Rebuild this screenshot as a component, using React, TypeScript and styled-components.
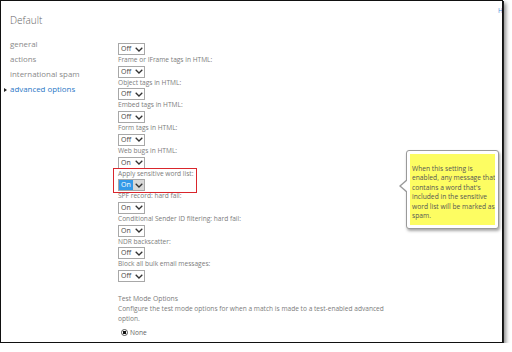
import React from "react";
import styled, { createGlobalStyle } from "styled-components";

const GlobalStyle = createGlobalStyle`
  html, body {
    margin: 0;
    padding: 0;
    background: #fff;
  }
  body {
    font-family: "Open Sans", "Noto Sans", sans-serif;
  }
`;

interface Option {
  label?: string;
  value: "On" | "Off";
  highlight?: boolean;
}

const options: Option[] = [
  { value: "Off" },
  { label: "Frame or IFrame tags in HTML:", value: "Off" },
  { label: "Object tags in HTML:", value: "Off" },
  { label: "Embed tags in HTML:", value: "Off" },
  { label: "Form tags in HTML:", value: "Off" },
  { label: "Web bugs in HTML:", value: "On" },
  { label: "Apply sensitive word list:", value: "On", highlight: true },
  { label: "SPF record: hard fail:", value: "On" },
  { label: "Conditional Sender ID filtering: hard fail:", value: "On" },
  { label: "NDR backscatter:", value: "Off" },
  { label: "Block all bulk email messages:", value: "Off" },
];

const navItems = ["general", "actions", "international spam", "advanced options"];

const tipLines = [
  "When this setting is",
  "enabled, any message that",
  "contains a word that's",
  "included in the sensitive",
  "word list will be marked as",
  "spam.",
];

function Chevron() {
  return (
    <svg width="8" height="5" viewBox="0 0 8 5">
      <path d="M0.7 0.7 L4 4 L7.3 0.7" fill="none" stroke="#333" strokeWidth="1.3" />
    </svg>
  );
}

function App() {
  return (
    <>
      <GlobalStyle />
      <Window>
        <Title>Default</Title>
        <HelpLink>Help</HelpLink>
        <Body>
          <Nav>
            {navItems.map((item, i) => (
              <NavItem key={item} $active={i === navItems.length - 1}>
                {item}
              </NavItem>
            ))}
          </Nav>
          <Main>
            {options.map((o, i) => (
              <Field key={i} $highlight={o.highlight}>
                {o.label && <Label>{o.label}</Label>}
                <SelectBox>
                  <SelectValue $selected={o.highlight}>{o.value}</SelectValue>
                  <SelectArrow $selected={o.highlight}>
                    <Chevron />
                  </SelectArrow>
                </SelectBox>
              </Field>
            ))}
            <Section>
              <SectionTitle>Test Mode Options</SectionTitle>
              <SectionText>
                Configure the test mode options for when a match is made to a test-enabled advanced
                option.
              </SectionText>
              <RadioRow>
                <Radio />
                None
              </RadioRow>
            </Section>
          </Main>
        </Body>
        <Tooltip>
          <TipInner>
            {tipLines.map((l) => (
              <div key={l}>{l}</div>
            ))}
          </TipInner>
        </Tooltip>
      </Window>
    </>
  );
}

export default App;

const Window = styled.div`
  position: relative;
  box-sizing: border-box;
  width: 503px;
  height: 343px;
  border: 1px solid #111;
  background: #fff;
  overflow: hidden;
  box-shadow: 1px 1px 0 #222, 3px 3px 4px rgba(0, 0, 0, 0.45);
`;

const Title = styled.div`
  padding: 12px 0 0 9px;
  height: 20px;
  font-size: 10px;
  line-height: 14px;
  font-weight: 300;
  color: #666;
`;

const HelpLink = styled.span`
  position: absolute;
  top: 5px;
  right: -10px;
  font-size: 6.5px;
  color: #4a8fd8;
`;

const Body = styled.div`
  display: grid;
  grid-template-columns: 117px 1fr;
  padding-top: 4px;
`;

const Nav = styled.ul`
  list-style: none;
  margin: 0;
  padding: 0 0 0 9px;
`;

const NavItem = styled.li<{ $active?: boolean }>`
  position: relative;
  font-size: 7.9px;
  line-height: 15px;
  color: ${({ $active }) => ($active ? "#2a78c6" : "#8a8a8a")};

  &::before {
    content: "";
    display: ${({ $active }) => ($active ? "block" : "none")};
    position: absolute;
    left: -6px;
    top: 5.5px;
    border-left: 3px solid #222;
    border-top: 2.5px solid transparent;
    border-bottom: 2.5px solid transparent;
  }
`;

const Main = styled.div`
  padding-top: 6px;
`;

const Field = styled.div<{ $highlight?: boolean }>`
  position: relative;

  &::after {
    content: "";
    display: ${({ $highlight }) => ($highlight ? "block" : "none")};
    position: absolute;
    left: -5px;
    top: -1px;
    width: 82px;
    bottom: -2px;
    border: 1px solid #d9262c;
  }
`;

const Label = styled.div`
  font-size: 6.6px;
  line-height: 10.7px;
  color: #7c7c7c;
  white-space: nowrap;
`;

const SelectBox = styled.div`
  display: flex;
  box-sizing: border-box;
  height: 12px;
  width: 27px;
  border: 1px solid #a8a8a8;
  background: #fff;
`;

const SelectValue = styled.span<{ $selected?: boolean }>`
  flex: 1;
  padding-left: 2px;
  font-size: 7px;
  line-height: 10px;
  color: ${({ $selected }) => ($selected ? "#fff" : "#444")};
  background: ${({ $selected }) => ($selected ? "#3399e8" : "transparent")};
`;

const SelectArrow = styled.span<{ $selected?: boolean }>`
  display: flex;
  align-items: center;
  justify-content: center;
  width: 11px;
  background: ${({ $selected }) => ($selected ? "#d8d8d8" : "transparent")};
`;

const Section = styled.div`
  margin-top: 11px;
  color: #7c7c7c;
`;

const SectionTitle = styled.div`
  font-size: 6.8px;
  line-height: 11px;
`;

const SectionText = styled.div`
  width: 272px;
  font-size: 6.6px;
  line-height: 10px;
`;

const RadioRow = styled.div`
  display: flex;
  align-items: center;
  gap: 2px;
  margin-top: 4px;
  padding-left: 3px;
  font-size: 6.6px;
  color: #666;
`;

const Radio = styled.span`
  box-sizing: border-box;
  width: 7px;
  height: 7px;
  border-radius: 50%;
  border: 1px solid #555;
  background: radial-gradient(circle, #111 0 1.6px, #fff 2px);
`;

const Tooltip = styled.div`
  position: absolute;
  left: 405px;
  top: 149px;
  width: 93px;
  box-sizing: border-box;
  padding: 3px;
  background: #fff;
  border: 1px solid #9a9a9a;
  border-radius: 3px;
  box-shadow: 1px 2px 3px rgba(0, 0, 0, 0.35);

  &::before {
    content: "";
    position: absolute;
    left: -8px;
    top: 28px;
    border-right: 8px solid #9a9a9a;
    border-top: 7px solid transparent;
    border-bottom: 7px solid transparent;
  }

  &::after {
    content: "";
    position: absolute;
    left: -6px;
    top: 29px;
    border-right: 7px solid #fff;
    border-top: 6px solid transparent;
    border-bottom: 6px solid transparent;
  }
`;

const TipInner = styled.div`
  background: #fdfd62;
  padding: 10px 2px 5px 2px;
  font-size: 6.7px;
  line-height: 9.4px;
  color: #555;
  white-space: nowrap;
  overflow: hidden;
`;
